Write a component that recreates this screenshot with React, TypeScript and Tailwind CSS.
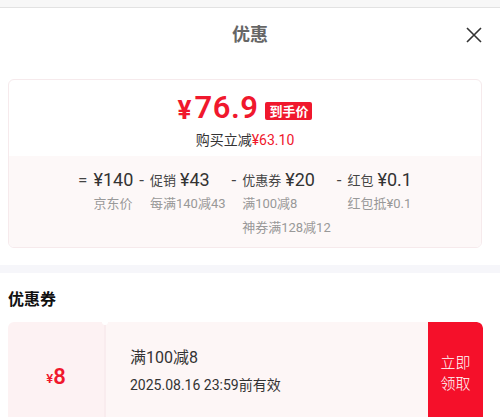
import React from "react";

const CJK = "font-['Roboto','Noto_Sans_CJK_SC',sans-serif]";

type Part = { sign: string; name?: string; amount: string; notes: string[] };

const PARTS: Part[] = [
  { sign: "=", amount: "¥140", notes: ["京东价"] },
  { sign: "-", name: "促销", amount: "¥43", notes: ["每满140减43"] },
  { sign: "-", name: "优惠券", amount: "¥20", notes: ["满100减8", "神券满128减12"] },
  { sign: "-", name: "红包", amount: "¥0.1", notes: ["红包抵¥0.1"] },
];

export default function App() {
  return (
    <div className={`w-[500px] h-[417px] overflow-hidden bg-white ${CJK}`}>
      <div className="h-[8px] bg-[#f7f7f7] border-b border-[#e2e2e2]" />

      <header className="relative h-[54px] flex items-center justify-center">
        <h1 className="text-[18px] font-bold text-[#666] leading-none">优惠</h1>
        <button className="absolute right-[18px] top-[19px] w-[16px] h-[16px]" aria-label="关闭">
          <svg viewBox="0 0 16 16" className="w-full h-full" fill="none" stroke="#333" strokeWidth="1.6">
            <path d="M1 1 L15 15 M15 1 L1 15" />
          </svg>
        </button>
      </header>

      <div className="mt-[17px] ml-2 mr-[18px] h-[169px] rounded-md border border-[#f6eaec] overflow-hidden flex flex-col">
        <div className="h-[76px] flex flex-col items-center pt-[12px]">
          <div className="flex items-end gap-[3px] text-[#f0182d] leading-none">
            <span className="text-[26px] font-bold">¥</span>
            <span className="text-[31px] font-semibold tracking-[0.5px]">76.9</span>
            <span className="mb-[3px] ml-[4px] px-[4px] h-[18px] flex items-center rounded-[2px] bg-[#f0182d] text-white text-[13px] font-bold">
              到手价
            </span>
          </div>
          <div className="mt-[10px] text-[14px] text-[#333] leading-none">
            购买立减<span className="text-[#f0182d]">¥63.10</span>
          </div>
        </div>
        <div className="flex-1 bg-[#fdf8f8] flex justify-center gap-[6px] pt-[12px]">
          {PARTS.map((p) => (
            <div key={p.amount} className="flex gap-[6px]">
              <span className="h-[24px] flex items-center text-[17px] text-[#444] leading-none">{p.sign}</span>
              <div className="flex flex-col">
                <div className="h-[24px] flex items-center gap-[4px] leading-none">
                  {p.name && <span className="text-[13px] text-[#444]">{p.name}</span>}
                  <span className="text-[18px] text-[#333]">{p.amount}</span>
                </div>
                {p.notes.map((n) => (
                  <span key={n} className="text-[13px] text-[#999] leading-[24px]">
                    {n}
                  </span>
                ))}
              </div>
            </div>
          ))}
        </div>
      </div>

      <div className="mt-[17px] h-[8px] bg-[#f6f6fa]" />

      <h2 className="mt-[19px] ml-2 text-[16px] font-bold text-[#111] leading-none">优惠券</h2>

      <div className="mt-[14px] ml-2 mr-[17px] h-[110px] flex rounded-t-md overflow-hidden">
        <div className="w-[96px] bg-[#fdf2f3] flex items-center justify-center text-[#f0182d] font-semibold">
          <span className="text-[13px] mt-[4px]">¥</span>
          <span className="text-[22px] leading-none">8</span>
        </div>
        <div className="relative w-[2px] bg-[#f9ecee]">
          <span className="absolute -top-[3px] -left-[2px] w-[6px] h-[6px] rounded-full bg-white" />
        </div>
        <div className="flex-1 bg-[#fdf6f6] flex flex-col pl-[24px] pt-[28px] text-[#333] leading-none">
          <span className="text-[16px]">满100减8</span>
          <span className="mt-[12px] text-[14px]">2025.08.16 23:59前有效</span>
        </div>
        <button className="w-[55px] bg-[#f5102a] rounded-tr-md flex flex-col items-center pt-[31px] text-white text-[15px] leading-[21px] font-light">
          <span>立即</span>
          <span>领取</span>
        </button>
      </div>
    </div>
  );
}
